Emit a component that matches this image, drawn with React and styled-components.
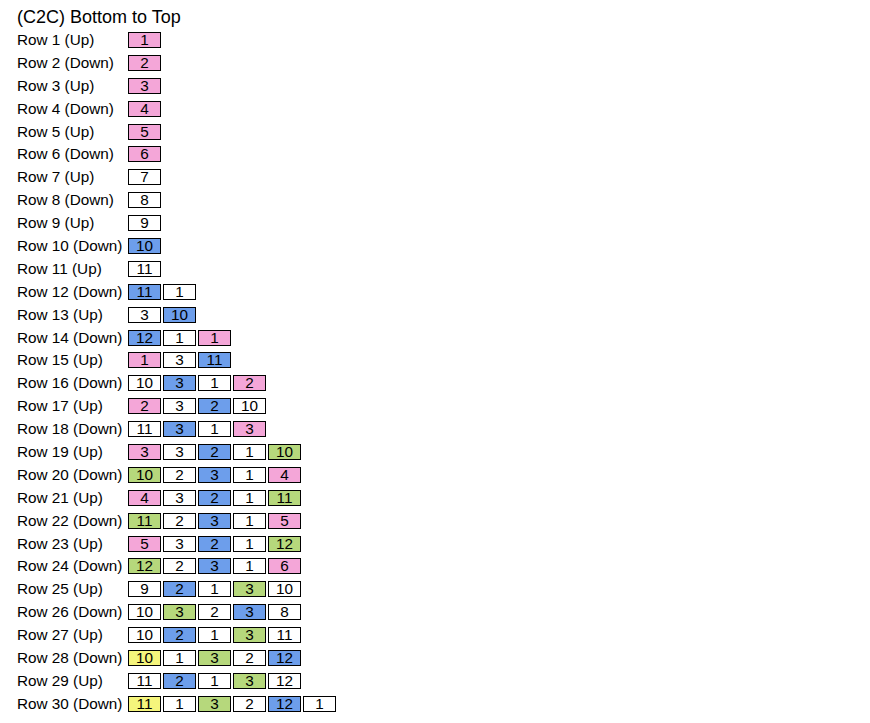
import React from "react";
import styled, { createGlobalStyle } from "styled-components";

const rows = [
  ["p1"],
  ["p2"],
  ["p3"],
  ["p4"],
  ["p5"],
  ["p6"],
  ["w7"],
  ["w8"],
  ["w9"],
  ["b10"],
  ["w11"],
  ["b11", "w1"],
  ["w3", "b10"],
  ["b12", "w1", "p1"],
  ["p1", "w3", "b11"],
  ["w10", "b3", "w1", "p2"],
  ["p2", "w3", "b2", "w10"],
  ["w11", "b3", "w1", "p3"],
  ["p3", "w3", "b2", "w1", "g10"],
  ["g10", "w2", "b3", "w1", "p4"],
  ["p4", "w3", "b2", "w1", "g11"],
  ["g11", "w2", "b3", "w1", "p5"],
  ["p5", "w3", "b2", "w1", "g12"],
  ["g12", "w2", "b3", "w1", "p6"],
  ["w9", "b2", "w1", "g3", "w10"],
  ["w10", "g3", "w2", "b3", "w8"],
  ["w10", "b2", "w1", "g3", "w11"],
  ["y10", "w1", "g3", "w2", "b12"],
  ["w11", "b2", "w1", "g3", "w12"],
  ["y11", "w1", "g3", "w2", "b12", "w1"],
];

const colors = {
  p: "#f4a6d8",
  b: "#6d9eeb",
  g: "#b6d87c",
  y: "#f5f57c",
  w: "#ffffff",
};

export default function App() {
  return (
    <>
      <GlobalStyle />
      <Page>
        <Title>(C2C) Bottom to Top</Title>
        {rows.map((cells, i) => (
          <Row key={i}>
            <Label>
              Row {i + 1} ({i % 2 === 0 ? "Up" : "Down"})
            </Label>
            {cells.map((c, j) => (
              <Cell key={j} $color={colors[c[0]]}>
                {c.slice(1)}
              </Cell>
            ))}
          </Row>
        ))}
      </Page>
    </>
  );
}

const GlobalStyle = createGlobalStyle`
  body {
    margin: 0;
    background: #fff;
    font-family: "Liberation Sans", Arial, sans-serif;
    color: #000;
  }
`;

const Page = styled.div`
  padding: 6px 0 0 17px;
`;

const Title = styled.div`
  font-size: 18px;
  line-height: 22.5px;
`;

const Row = styled.div`
  display: flex;
  align-items: center;
  height: 22.9px;
`;

const Label = styled.div`
  width: 111px;
  font-size: 15.3px;
  white-space: nowrap;
`;

const Cell = styled.div`
  box-sizing: border-box;
  width: 33px;
  height: 16px;
  margin-right: 2px;
  border: 1px solid #000;
  background: ${(p) => p.$color};
  font-size: 15.3px;
  line-height: 14px;
  text-align: center;
`;
